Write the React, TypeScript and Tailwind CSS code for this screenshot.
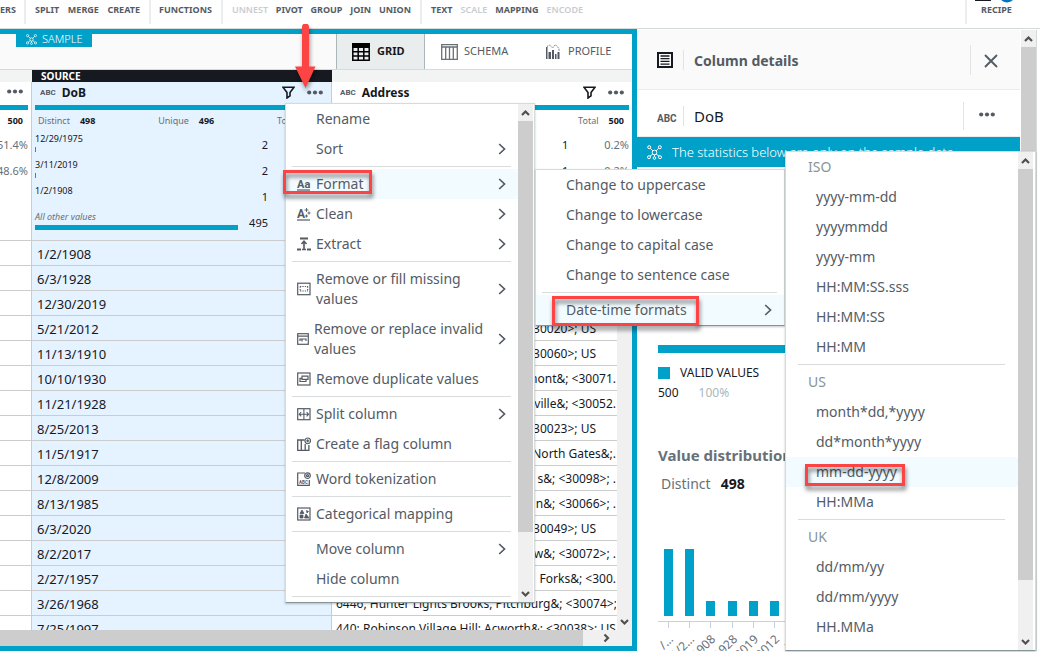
import React from "react";

const dobRows = [
  "1/2/1908", "6/3/1928", "12/30/2019", "5/21/2012", "11/13/1910", "10/10/1930", "11/21/1928", "8/25/2013",
  "11/5/1917", "12/8/2009", "8/13/1985", "6/3/2020", "8/2/2017", "2/27/1957", "3/26/1968", "7/25/1997",
];

type Address = { text: string; align: "start" | "end" | "inset" };

const addressRows: Address[] = [
  { text: "", align: "end" },
  { text: "", align: "end" },
  { text: "", align: "end" },
  { text: "<30020>; US", align: "inset" },
  { text: "<30060>; US", align: "inset" },
  { text: "mont&; <30071.", align: "end" },
  { text: "ville&; <30052.", align: "end" },
  { text: "<30023>; US", align: "inset" },
  { text: "North Gates&;.", align: "end" },
  { text: "s&; <30098>; .", align: "end" },
  { text: "n&; <30066>; .", align: "end" },
  { text: "<30049>; US", align: "inset" },
  { text: "w&; <30072>; .", align: "end" },
  { text: "Forks&; <300.", align: "end" },
  { text: "6446, Hunter Lights Brooks, Pitchburg&; <30074>;.", align: "start" },
  { text: "440; Robinson Village Hill; Acworth&; <30038>; US", align: "start" },
];

const addressAlign = {
  start: "pl-1 text-left",
  end: "flex justify-end",
  inset: "flex justify-end pr-5",
};

function Dots() {
  return (
    <svg className="shrink-0" width="16" height="5" viewBox="0 0 16 5" fill="#545b64">
      <circle cx="2.2" cy="2.5" r="2.1" />
      <circle cx="8" cy="2.5" r="2.1" />
      <circle cx="13.8" cy="2.5" r="2.1" />
    </svg>
  );
}

function Filter() {
  return (
    <svg className="shrink-0" width="13" height="13" viewBox="0 0 13 13" fill="none" stroke="#16191f" strokeWidth="1.6">
      <path d="M1 1.3h11L8 6.6v3.2L5 12V6.6z" />
    </svg>
  );
}

function Network({ size }: { size: number }) {
  return (
    <svg className="shrink-0" width={size} height={size} viewBox="0 0 15 15" fill="none" stroke="#fff" strokeWidth="1">
      <circle cx="7.5" cy="7.5" r="2.3" />
      <circle cx="2.2" cy="2.2" r="1.5" />
      <circle cx="12.8" cy="2.2" r="1.5" />
      <circle cx="2" cy="12.2" r="1.5" />
      <circle cx="13" cy="12.2" r="1.5" />
      <circle cx="7.5" cy="13" r="1.3" />
      <path d="M3.3 3.3l2.6 2.6M11.7 3.3L9.1 5.9M3 11.2l2.8-2.2M12 11.2L9.2 9M7.5 9.8v2" />
    </svg>
  );
}

function Chevron() {
  return (
    <svg className="ml-auto shrink-0" width="8" height="12" viewBox="0 0 8 12" fill="none" stroke="#545b64" strokeWidth="1.7">
      <path d="M1.2 1l5.3 5-5.3 5" />
    </svg>
  );
}

function Abc({ large = false }: { large?: boolean }) {
  return (
    <span
      className={
        large
          ? "font-['Roboto',sans-serif] text-[10px] font-bold text-[#545b64]"
          : "font-['Roboto',sans-serif] text-[8px] font-bold text-[#545b64]"
      }
    >
      ABC
    </span>
  );
}

function Arrow({ path }: { path: string }) {
  return (
    <svg width="15" height="17" viewBox="0 0 15 17" fill="none" stroke="#505050" strokeWidth="2.2">
      <path d={path} />
    </svg>
  );
}
const UP = "M4 11l3.5-3.5L11 11";
const DOWN = "M4 7l3.5 3.5L11 7";
const RIGHT = "M5.500 4.500l3.500 3.500-3.500 3.500";

function VScroll({ thumb }: { thumb: string }) {
  return (
    <div className="flex w-[15px] shrink-0 flex-col bg-[#f0f0f0]">
      <Arrow path={UP} />
      <div className={thumb} />
      <div className="mt-auto h-[17px]">
        <Arrow path={DOWN} />
      </div>
    </div>
  );
}

type IconName = "format" | "clean" | "extract" | "missing" | "invalid" | "dup" | "split" | "flag" | "word" | "cat";

function MenuIcon({ name }: { name: IconName }) {
  const w = name === "invalid" ? 12 : 14;
  const letters = "font-['Roboto',sans-serif] font-bold";
  return (
    <svg className="shrink-0" width={w} height="14" viewBox={`0 0 ${w} 14`} fill="none" stroke="#545b64" strokeWidth="1.2">
      {name === "format" && (
        <>
          <text x="0" y="10.5" fontSize="11" fill="#545b64" stroke="none" className={letters}>Aa</text>
          <path d="M0 13h13" />
        </>
      )}
      {name === "clean" && (
        <>
          <text x="0" y="11" fontSize="12" fill="#545b64" stroke="none" className={letters}>A</text>
          <path d="M0 13h13" />
          <path d="M9.5 1v4M7.5 3h4M12 4.5v3M10.5 6h3M9.5 7.5v3M8 9h3" strokeWidth="0.9" />
        </>
      )}
      {name === "extract" && (
        <>
          <path d="M3 1.5h8M0 12.5h4M10 12.5h4" strokeWidth="1.8" />
          <path d="M7 12V5M4.5 7L7 4.3 9.5 7M5 12.5h4" strokeWidth="1.6" />
        </>
      )}
      {name === "missing" && (
        <>
          <rect x="0.7" y="1.2" width="12.3" height="11.5" />
          <path d="M3 4.5h8M3 9h8M3.2 4.5V9M10.6 4.5V9" strokeDasharray="1.3 1.1" />
        </>
      )}
      {name === "invalid" && (
        <>
          <rect x="0.7" y="1.7" width="10.6" height="10.6" />
          <path d="M1 4.2h10M3 9V7h6v2M5 7v2.5" />
        </>
      )}
      {name === "dup" && (
        <>
          <rect x="0.7" y="1" width="12.3" height="12" />
          <path d="M5 4.2h6v3.200H5zM9 7.500v2H3V6.300h2" strokeWidth="1.2" />
        </>
      )}
      {name === "split" && (
        <>
          <rect x="0.7" y="1.7" width="12.3" height="11" />
          <path d="M6.9 2v10.500M2 7.200h10M4.200 5L2.200 7.200l2 2.200M9.600 5l2 2.200-2 2.200" strokeWidth="1.1" />
        </>
      )}
      {name === "flag" && (
        <>
          <path d="M7.5 3H0.7v10.300h11.200V8M4.300 3v10.300M8.200 7v6.300" strokeWidth="1.3" />
          <circle cx="10.7" cy="3.8" r="2.8" />
          <path d="M10.7 2.300v3M9.200 3.800h3" />
        </>
      )}
      {name === "word" && (
        <>
          <path d="M8 1H0.7v12.300h11.600V8" />
          <circle cx="10.5" cy="3.7" r="2.8" />
          <circle cx="10.5" cy="3.7" r="1" />
          <text x="2" y="11.5" fontSize="4.5" fill="#545b64" stroke="none" className={letters}>ABC</text>
        </>
      )}
      {name === "cat" && (
        <>
          <rect x="0.7" y="1" width="12.3" height="12" />
          <path d="M5 3l2 3.500H3zM3 8h3v3H3zM9 7l3 4H7.500zM9.500 3.500l2 1-1.500 1.500z" fill="#545b64" strokeWidth="0.8" />
        </>
      )}
    </svg>
  );
}

type Entry = { label: string; icon?: IconName; sub?: boolean; on?: boolean } | null;

const mainMenu: Entry[] = [
  { label: "Rename" },
  { label: "Sort", sub: true },
  null,
  { label: "Format", icon: "format", sub: true, on: true },
  { label: "Clean", icon: "clean", sub: true },
  { label: "Extract", icon: "extract", sub: true },
  null,
  { label: "Remove or fill missing values", icon: "missing", sub: true },
  { label: "Remove or replace invalid values", icon: "invalid", sub: true },
  { label: "Remove duplicate values", icon: "dup" },
  null,
  { label: "Split column", icon: "split", sub: true },
  { label: "Create a flag column", icon: "flag" },
  null,
  { label: "Word tokenization", icon: "word" },
  null,
  { label: "Categorical mapping", icon: "cat" },
  null,
  { label: "Move column", sub: true },
  { label: "Hide column" },
  null,
];

const formatMenu: Entry[] = [
  { label: "Change to uppercase" },
  { label: "Change to lowercase" },
  { label: "Change to capital case" },
  { label: "Change to sentence case" },
  null,
  { label: "Date-time formats", sub: true, on: true },
];

const dateGroups = [
  { title: "ISO", items: ["yyyy-mm-dd", "yyyymmdd", "yyyy-mm", "HH:MM:SS.sss", "HH:MM:SS", "HH:MM"] },
  { title: "US", items: ["month*dd,*yyyy", "dd*month*yyyy", "mm-dd-yyyy", "HH:MMa"] },
  { title: "UK", items: ["dd/mm/yy", "dd/mm/yyyy", "HH.MMa"] },
];

function MenuItems({ entries }: { entries: Entry[] }) {
  return (
    <>
      {entries.map((e, i) =>
        e === null ? (
          <div key={i} className="mr-[7px] ml-1.5 h-[5px] py-0.5">
            <div className="h-px bg-[#d9dcdc]" />
          </div>
        ) : (
          <button
            key={i}
            role="menuitem"
            className={
              e.on
                ? "flex w-full items-center bg-[#f2fbff] py-[5px] pr-3 pl-[11px] text-left leading-5"
                : "flex w-full items-center py-[5px] pr-3 pl-[11px] text-left leading-5"
            }
          >
            {e.icon ? <MenuIcon name={e.icon} /> : <span className="w-3.5 shrink-0" />}
            <span className={e.sub ? "mr-2 ml-[5px]" : "ml-[5px] whitespace-nowrap"}>{e.label}</span>
            {e.sub && <Chevron />}
          </button>
        ),
      )}
    </>
  );
}

function ToolGroup({ items, off = [], className }: { items: string[]; off?: string[]; className: string }) {
  return (
    <div className={"flex h-6 shrink-0 items-center justify-between pb-1 " + className}>
      {items.map((t) => (
        <button key={t} className={off.includes(t) ? "font-semibold text-[#c9cccf]" : "font-bold text-[#545b64]"}>
          {t}
        </button>
      ))}
    </div>
  );
}

function Toolbar() {
  return (
    <header className="flex h-[29px] shrink-0 border-b border-[#d5dbdb] bg-white text-[9px]">
      <ToolGroup items={["ERS"]} className="w-6" />
      <ToolGroup items={["SPLIT", "MERGE", "CREATE"]} className="w-[125px] border-l-2 border-[#eaeded] px-[9px]" />
      <ToolGroup items={["FUNCTIONS"]} className="w-[72px] border-l-2 border-[#eaeded] px-2" />
      <ToolGroup
        items={["UNNEST", "PIVOT", "GROUP", "JOIN", "UNION"]}
        off={["UNNEST"]}
        className="w-[199px] border-l-2 border-[#eaeded] px-[9px]"
      />
      <ToolGroup
        items={["TEXT", "SCALE", "MAPPING", "ENCODE"]}
        off={["SCALE", "ENCODE"]}
        className="w-[172px] border-l-2 border-[#eaeded] px-[9px]"
      />
      <div className="relative ml-auto h-6 w-[75px] border-l-2 border-[#eaeded]">
        <div className="flex h-5 items-center pl-3.5">
          <button className="font-bold text-[#545b64]">RECIPE</button>
        </div>
        <svg className="absolute top-0 left-2" width="42" height="3" viewBox="0 0 42 3">
          <path d="M0 0h16v1H0z" fill="#16191f" />
          <circle cx="32" cy="-6" r="8.5" fill="#0073bb" />
        </svg>
      </div>
    </header>
  );
}

function ViewTabs() {
  return (
    <div className="flex h-9 shrink-0 items-start border-b border-[#d5dbdb] bg-[#fafafa]">
      <div className="ml-4 flex h-[13px] w-[76px] items-center bg-[#00a1c9] pb-[3px] pl-2.5 text-[11px] font-light text-white">
        <Network size={11} />
        <span className="ml-[5px] leading-[10px]">SAMPLE</span>
      </div>
      <nav className="ml-auto flex h-[35px] w-[296px] bg-white text-[11px]">
        <button className="flex w-[89px] items-center border-x border-[#aab7b8] bg-[#eaeded] pl-[15px] font-bold text-[#16191f]">
          <svg width="18" height="18" viewBox="0 0 18 18" fill="none" stroke="#000" strokeWidth="1.5">
            <path d="M0 0h18v5H0z" fill="#000" stroke="none" />
            <path d="M0.8 4v13.200h16.400V4M6.200 4v13M11.800 4v13M1 8.800h16M1 13h16" />
          </svg>
          <span className="ml-[7px]">GRID</span>
        </button>
        <button className="flex w-[105px] items-center pl-4 text-[#545b64]">
          <svg width="17" height="16" viewBox="0 0 17 16" fill="none" stroke="#687078" strokeWidth="1.3">
            <path d="M0.7 0.700h15.600v14.600H0.700zM4.700 3v12M8.500 3v12M12.300 3v12M0.700 3h15.600" />
          </svg>
          <span className="ml-1.5">SCHEMA</span>
        </button>
        <button className="flex items-center pl-4 text-[#545b64]">
          <svg width="14" height="15" viewBox="0 0 14 15">
            <path d="M0 3h1.500v12H0zM2.500 8H5v7H2.500zM6 6h2v9H6zM9 10h1.500v5H9zM11.500 8h2v7h-2z" fill="#545b64" />
            <path d="M1 2.500L3.500 1 6.500 4l3-3.300L13 4.500v3" fill="none" stroke="#687078" strokeDasharray="1.500 1" />
          </svg>
          <span className="ml-2">PROFILE</span>
        </button>
      </nav>
    </div>
  );
}

function Total() {
  return (
    <span className="text-[#687078]">
      Total<b className="ml-2.5 text-[#16191f]">500</b>
    </span>
  );
}

function ValueStat({ label, count, bar, other }: { label: string; count: string; bar: string; other?: boolean }) {
  return (
    <div className="flex h-[26px] items-center pr-14">
      <div className="h-[26px] flex-1 pt-px">
        <div className={other ? "h-3 text-[9px] leading-3 text-[#687078] italic" : "h-3 text-[9px] leading-3"}>{label}</div>
        <div className={"mt-0.5 h-[5px] bg-[#00a1c9] " + bar} />
      </div>
      <span className="text-[11px]">{count}</span>
    </div>
  );
}

function GridTable() {
  return (
    <div className="relative min-h-0 flex-1 overflow-hidden">
      <table className="w-full table-fixed border-separate border-spacing-0 bg-white text-left text-[#16191f]">
        <colgroup>
          <col className="w-8" />
          <col className="w-[300px]" />
          <col />
        </colgroup>
        <thead>
          <tr className="bg-[#f2f3f3]">
            <td className="h-3 p-0" />
            <th className="h-3 bg-[#16191f] p-0 pl-[9px] text-[10px] leading-3 font-bold text-white">SOURCE</th>
            <td className="h-3 p-0" />
          </tr>
          <tr className="align-top text-[9px] font-normal">
            <td className="h-[159px] border-r border-b border-[#ccc] p-0">
              <div className="flex h-[23px] items-center justify-end pr-2 pb-1">
                <Dots />
              </div>
              <div className="mr-[3px] h-[5px] bg-[#00a1c9]" />
              <div className="flex h-[22px] items-center justify-end pr-2 font-bold">500</div>
              {["51.4%", "48.6%"].map((p) => (
                <div key={p} className="flex h-[26px] items-center justify-end overflow-hidden pr-[3px] text-[11px] text-[#687078]">
                  {p}
                </div>
              ))}
            </td>
            <th className="border-r border-b border-[#ccc] bg-[#e5f2ff] p-0 pl-[3px] font-normal">
              <div className="flex h-[23px] items-center pr-2 pb-0.5 pl-[5px]">
                <Abc />
                <span className="ml-1.5 text-[12px] font-bold">DoB</span>
                <span className="ml-auto flex items-center gap-3">
                  <Filter />
                  <Dots />
                </span>
              </div>
              <div className="mr-[3px] h-[5px] bg-[#00a1c9]" />
              <div className="flex h-[22px] items-center justify-between pr-2 pl-[3px] text-[#687078]">
                <span>
                  Distinct<b className="ml-2.5 text-[#16191f]">498</b>
                </span>
                <span>
                  Unique<b className="ml-2.5 text-[#16191f]">496</b>
                </span>
                <Total />
              </div>
              <div className="pr-[7px]">
                <ValueStat label="12/29/1975" count="2" bar="w-px" />
                <ValueStat label="3/11/2019" count="2" bar="w-px" />
                <ValueStat label="1/2/1908" count="1" bar="w-0" />
                <ValueStat label="All other values" count="495" bar="w-[203px]" other />
              </div>
            </th>
            <th className="border-b border-[#ccc] p-0 pl-[3px] font-normal">
              <div className="flex h-[23px] items-center pr-2 pb-0.5 pl-[5px]">
                <Abc />
                <span className="ml-1.5 text-[12px] font-bold">Address</span>
                <span className="ml-auto flex items-center gap-3">
                  <Filter />
                  <Dots />
                </span>
              </div>
              <div className="mr-[3px] h-[5px] bg-[#00a1c9]" />
              <div className="flex h-[22px] items-center justify-end pr-2">
                <Total />
              </div>
              {[0, 1].map((i) => (
                <div key={i} className="flex h-[26px] items-center justify-end gap-9 pr-[3px] text-[11px]">
                  <span>1</span>
                  <span className="text-[#687078]">0.2%</span>
                </div>
              ))}
            </th>
          </tr>
        </thead>
        <tbody className="text-[12px]">
          {dobRows.map((d, i) => (
            <tr key={i}>
              <td className="h-[25px] border-r border-b border-[#ccc] p-0" />
              <td className="h-[25px] border-r border-b border-[#ccc] bg-[#e5f2ff] p-0 pt-0.5 pl-[5px] text-[13px] leading-[22px]">
                {d}
              </td>
              <td className="h-[25px] border-b border-[#ccc] p-0 pt-0.5 pr-4 leading-[22px]">
                <div className={"overflow-hidden whitespace-nowrap " + addressAlign[addressRows[i].align]}>
                  {addressRows[i].text}
                </div>
              </td>
            </tr>
          ))}
        </tbody>
      </table>
      <div className="absolute top-[171px] right-0 bottom-0 flex">
        <VScroll thumb="h-16 bg-[#cdcdcd]" />
      </div>
    </div>
  );
}

function GridPanel() {
  return (
    <section className="flex min-w-0 flex-1 flex-col border-t-[5px] border-r-[5px] border-b-[5px] border-[#00a1c9] bg-white">
      <ViewTabs />
      <GridTable />
      <div className="flex h-4 shrink-0 bg-[#f0f0f0]">
        <div className="flex-1 bg-[#cdcdcd]" />
        <div className="flex w-[49px] pl-4">
          <Arrow path={RIGHT} />
        </div>
      </div>
    </section>
  );
}

const bars = [67, 67, 15, 15, 15, 15];
const barLabels = ["/…", "1/2…", "/1908", "/1928", "/2019", "/2012", "/19"];

function Chart() {
  return (
    <svg className="mt-[51px] w-full overflow-hidden" height="106" aria-label="Value distribution">
      {bars.map((h, i) => (
        <rect key={i} x={6 + Math.round(i * 21.2)} y={70 - h} width="9" height={h} fill="#00a1c9" />
      ))}
      <path d="M0 75.5h340" stroke="#c5d0e0" />
      {barLabels.map((l, i) => (
        <g key={i}>
          <path d={`M${10.5 + Math.round(i * 21.2)} 76v6`} stroke="#c5d0e0" />
          <text
            x="0"
            y="0"
            fontSize="12"
            fill="#687078"
            textAnchor="end"
            transform={`translate(${16 + Math.round(i * 21.2)} 94) rotate(-45)`}
          >
            {l}
          </text>
        </g>
      ))}
    </svg>
  );
}

function DetailsPanel() {
  return (
    <aside className="flex w-[403px] shrink-0 bg-white pt-px">
      <div className="min-w-0 flex-1 overflow-hidden">
        <div className="flex h-[60px] items-center border-b border-[#eaeded] bg-[#fafafa] pl-5">
          <svg width="16" height="16" viewBox="0 0 16 16" fill="none" stroke="#16191f" strokeWidth="2">
            <path d="M1 1h14v14H1z" />
            <path d="M3.5 4h9M3.5 6.700h9M3.500 9.400h9M3.500 12.100h9" strokeWidth="1.3" />
          </svg>
          <div className="ml-2.5 h-5 w-px bg-[#e1e4e4]" />
          <h2 className="ml-2.5 pt-0.5 text-[14px] font-bold text-[#545b64]">Column details</h2>
          <div className="mr-[49px] ml-auto h-[30px] w-0 border-l border-[#e1e4e4]">
            <button aria-label="Close" className="ml-[13px] flex h-[30px] items-center pt-0.5">
              <svg width="14" height="14" viewBox="0 0 14 14" stroke="#545b64" strokeWidth="1.9">
                <path d="M1 1l12 12M13 1L1 13" />
              </svg>
            </button>
          </div>
        </div>
        <div className="flex h-[47px] items-center border-b border-[#eaeded] pt-1.5 pl-5">
          <span className="w-[26px]">
            <Abc large />
          </span>
          <div className="h-5 w-px bg-[#e1e4e4]" />
          <span className="ml-2.5 text-[15px] text-[#16191f]">DoB</span>
          <div className="ml-auto flex h-7 w-[57px] items-center border-l border-[#e1e4e4] pb-1 pl-[15px]">
            <Dots />
          </div>
        </div>
        <div className="flex h-[30px] items-center bg-[#00a1c9] pl-2.5 text-[13px] text-white">
          <Network size={15} />
          <span className="ml-2.5 pt-0.5 font-light whitespace-nowrap">The statistics below are only on the sample data</span>
        </div>
        <div className="mt-0.5 border-t border-[#eaeded] pl-[21px]">
          <div className="mt-[175px] h-2 bg-[#00a1c9]" />
          <div className="mt-2.5 flex h-5 items-center text-[12px] text-[#16191f]">
            <div className="h-3 w-3 bg-[#00a1c9]" />
            <span className="ml-2.5">VALID VALUES</span>
          </div>
          <div className="flex h-5 items-center gap-5 text-[12px] text-[#16191f]">
            500<span className="text-[#aab7b8]">100%</span>
          </div>
          <h3 className="mt-10 h-6 text-[15px] leading-6 font-bold text-[#687078]">Value distribution</h3>
          <div className="mt-1 flex h-6 items-center gap-2.5 pl-[3px] text-[14px] text-[#687078]">
            Distinct<b className="text-[#16191f]">498</b>
          </div>
          <Chart />
        </div>
      </div>
      <div className="mr-[3px] ml-px flex border-r border-[#d5dbdb]">
        <VScroll thumb="h-[311px] bg-[#cdcdcd]" />
      </div>
    </aside>
  );
}

const menuBox =
  "absolute flex border border-[#d5dbdb] border-b-[#879596] bg-white text-[14px] text-[#545b64] shadow-[0_1px_2px_rgba(0,28,36,0.25)] ";
const mark = "pointer-events-none absolute border-[3px] border-[#fd4444] drop-shadow-[1px_4px_2px_rgba(0,0,0,0.5)] ";

export default function App() {
  return (
    <div className="relative flex h-screen flex-col overflow-hidden bg-white font-['Noto_Sans',sans-serif]">
      <Toolbar />
      <main className="flex min-h-0 flex-1 pb-px">
        <GridPanel />
        <DetailsPanel />
      </main>

      <div role="menu" aria-label="Column actions" className={menuBox + "top-[103px] left-[285px] w-[250px]"}>
        <div className="min-w-0 flex-1 pb-[3px]">
          <MenuItems entries={mainMenu} />
        </div>
        <VScroll thumb="h-[411px] bg-[#cdcdcd]" />
        <div className="w-px bg-white" />
      </div>

      <div role="menu" aria-label="Format" className={menuBox + "top-[169px] left-[535px] w-[250px]"}>
        <div className="min-w-0 flex-1">
          <MenuItems entries={formatMenu} />
        </div>
      </div>

      <div role="menu" aria-label="Date-time formats" className={menuBox + "top-[151px] left-[785px] w-[251px]"}>
        <div className="min-w-0 flex-1 pb-2">
          {dateGroups.map((g, gi) => (
            <React.Fragment key={g.title}>
              {gi > 0 && (
                <div className="mr-[13px] ml-3 h-[5px] py-0.5">
                  <div className="h-px bg-[#d9dcdc]" />
                </div>
              )}
              <div className="py-[5px] pl-[22px] leading-5 text-[#879596]">{g.title}</div>
              {g.items.map((t) => (
                <button
                  key={t}
                  role="menuitem"
                  className={
                    t === "mm-dd-yyyy"
                      ? "block w-full bg-[#f2fbff] py-[5px] pl-[30px] text-left leading-5"
                      : "block w-full py-[5px] pl-[30px] text-left leading-5"
                  }
                >
                  {t}
                </button>
              ))}
            </React.Fragment>
          ))}
        </div>
        <VScroll thumb="h-[411px] bg-[#cdcdcd]" />
        <div className="w-0.5 bg-white" />
      </div>

      <div className={mark + "top-[170px] left-[283px] h-6 w-[89px]"} />
      <div className={mark + "top-[296px] left-[552px] h-[30px] w-[147px]"} />
      <div className={mark + "top-[464px] left-[805px] h-[22px] w-[100px]"} />
      <svg
        className="pointer-events-none absolute top-6 left-[294px] drop-shadow-[1px_3px_2px_rgba(0,0,0,0.4)]"
        width="22"
        height="66"
        viewBox="0 0 22 66"
        fill="#fd4444"
      >
        <path d="M8 3a3.5 3.5 0 0 1 7 0v39.500h6.500L11.500 64 1 42.500h7z" />
      </svg>
    </div>
  );
}
